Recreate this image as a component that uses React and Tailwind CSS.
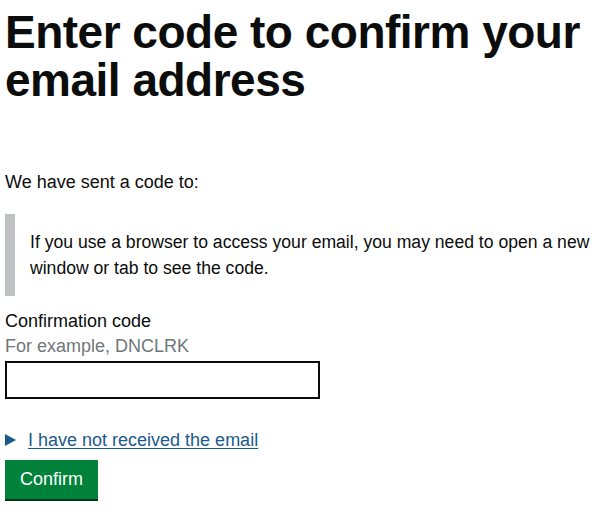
export default function App() {
  return (
    <div className="min-h-screen bg-white px-[5px] pt-[8px] text-[#0b0c0c]" style={{ fontFamily: '"Liberation Sans", Arial, sans-serif' }}>
      <h1 className="text-[46px] font-bold leading-[48px] tracking-[-0.5px]">
        Enter code to confirm your email address
      </h1>

      <p className="mt-[66px] text-[18px] leading-[24px]">We have sent a code to:</p>

      <div className="mt-[20px] flex border-l-[10px] border-[#bfc1c3] py-[15px] pl-[15px]">
        <p className="text-[17.6px] leading-[26px]">
          If you use a browser to access your email, you may need to open a new window or tab to see the code.
        </p>
      </div>

      <div className="mt-[13px] flex flex-col">
        <label className="text-[18px] leading-[25px]">Confirmation code</label>
        <span className="text-[18px] leading-[25px] text-[#6f777b]">For example, DNCLRK</span>
        <input type="text" className="mt-[2px] h-[38px] w-[315px] border-2 border-[#0b0c0c] px-2 outline-none" />
      </div>

      <div className="mt-[30px] flex items-center gap-[12px]">
        <svg width="11" height="12" viewBox="0 0 11 12">
          <polygon points="0,0 11,6 0,12" fill="#1d5a8c" />
        </svg>
        <a href="#" className="text-[18px] leading-[22px] text-[#1d5a8c] underline underline-offset-2">
          I have not received the email
        </a>
      </div>

      <button className="mt-[9px] h-[39px] bg-[#00823b] px-[15px] text-[18px] text-white shadow-[0_2px_0_#003618]">
        Confirm
      </button>
    </div>
  );
}
